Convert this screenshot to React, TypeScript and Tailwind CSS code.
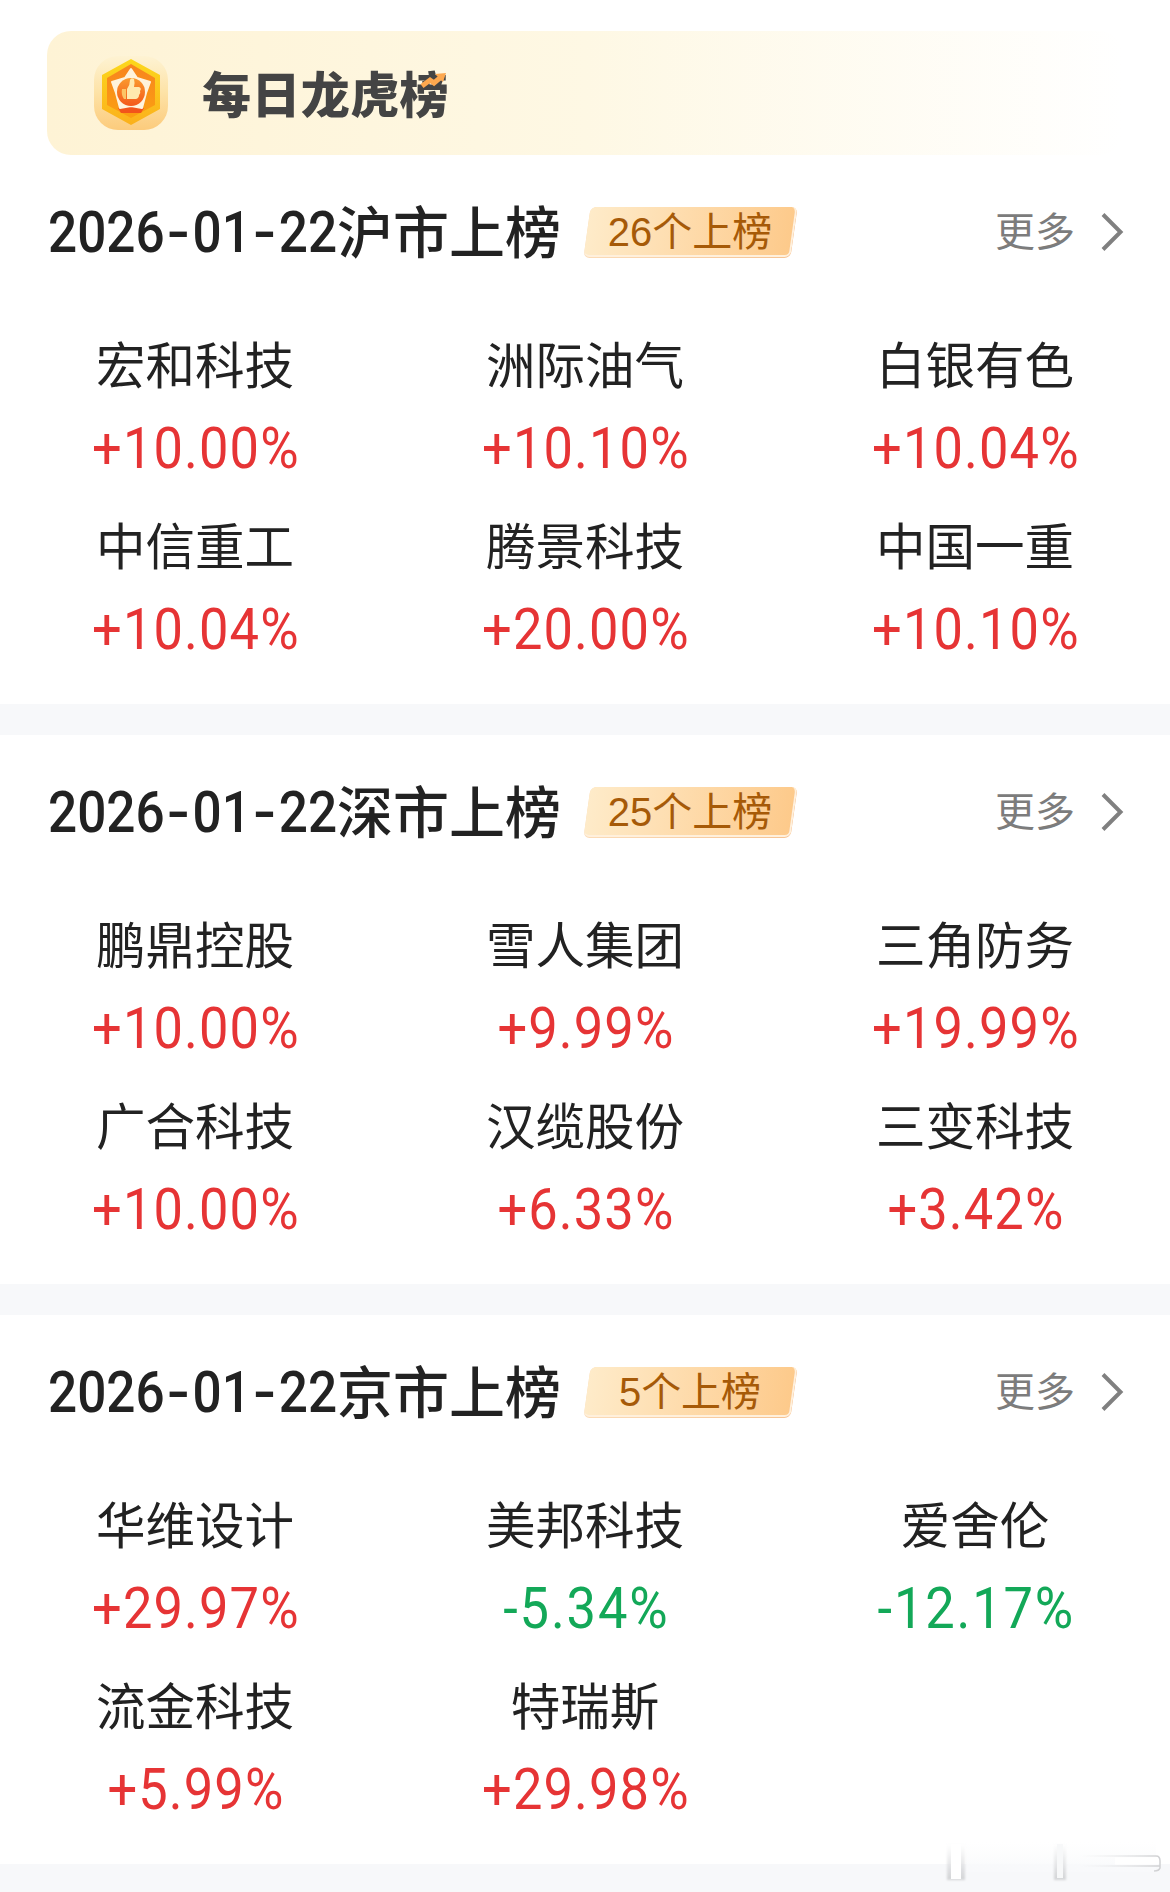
type Stock = {
  name: string;
  change: string;
};

type Market = {
  id: string;
  date: string;
  title: string;
  count: number;
  stocks: Stock[];
};

const MARKETS: Market[] = [
  {
    id: "sh",
    date: "2026-01-22",
    title: "沪市上榜",
    count: 26,
    stocks: [
      { name: "宏和科技", change: "+10.00%" },
      { name: "洲际油气", change: "+10.10%" },
      { name: "白银有色", change: "+10.04%" },
      { name: "中信重工", change: "+10.04%" },
      { name: "腾景科技", change: "+20.00%" },
      { name: "中国一重", change: "+10.10%" },
    ],
  },
  {
    id: "sz",
    date: "2026-01-22",
    title: "深市上榜",
    count: 25,
    stocks: [
      { name: "鹏鼎控股", change: "+10.00%" },
      { name: "雪人集团", change: "+9.99%" },
      { name: "三角防务", change: "+19.99%" },
      { name: "广合科技", change: "+10.00%" },
      { name: "汉缆股份", change: "+6.33%" },
      { name: "三变科技", change: "+3.42%" },
    ],
  },
  {
    id: "bj",
    date: "2026-01-22",
    title: "京市上榜",
    count: 5,
    stocks: [
      { name: "华维设计", change: "+29.97%" },
      { name: "美邦科技", change: "-5.34%" },
      { name: "爱舍伦", change: "-12.17%" },
      { name: "流金科技", change: "+5.99%" },
      { name: "特瑞斯", change: "+29.98%" },
    ],
  },
];

export default function App() {
  return (
    <div className="relative h-[1892px] w-[1170px] overflow-hidden bg-white font-['Noto_Sans_CJK_SC',sans-serif] text-[#222]">
      <Banner />
      {MARKETS.map((market) => (
        <MarketSection key={market.id} market={market} />
      ))}
      <Watermark />
    </div>
  );
}

function Banner() {
  return (
    <header className="h-[155px] pl-[47px] pt-[31px]">
      <div className="flex h-[124px] w-[1076px] items-center rounded-[24px] bg-linear-to-r from-[#fef3d5] via-[#fef8e4] to-white pl-[47px]">
        <MedalIcon />
        <h1 className="relative ml-[34px] pb-[4px] text-[49px] font-black leading-none tracking-[0.4px] text-[#444]">
          每日龙虎榜
          <svg viewBox="0 0 26 16" className="absolute right-[2px] top-[6px] h-[16px] w-[26px]">
            <path d="M1 13 L9 7 L13 10 L20 4" fill="none" stroke="#fda84f" strokeWidth="5" />
            <path d="M14 1 L25 0 L22 9 Z" fill="#fda84f" />
          </svg>
        </h1>
      </div>
    </header>
  );
}

function MedalIcon() {
  return (
    <svg viewBox="0 0 74 74" className="h-[74px] w-[74px]">
      <defs>
        <linearGradient id="tile" x1="0" y1="0" x2="0" y2="1">
          <stop offset="0" stopColor="#fef3d3" />
          <stop offset="0.5" stopColor="#fde2a6" />
          <stop offset="1" stopColor="#fccb7c" />
        </linearGradient>
        <linearGradient id="hex" x1="0" y1="0" x2="0" y2="1">
          <stop offset="0" stopColor="#fcd81c" />
          <stop offset="1" stopColor="#fbb01b" />
        </linearGradient>
        <linearGradient id="core" x1="0" y1="0" x2="0" y2="1">
          <stop offset="0" stopColor="#f88420" />
          <stop offset="1" stopColor="#fba010" />
        </linearGradient>
        <linearGradient id="disc" x1="0" y1="0" x2="0" y2="1">
          <stop offset="0" stopColor="#fa9a2e" />
          <stop offset="1" stopColor="#f4581a" />
        </linearGradient>
      </defs>
      <rect width="74" height="74" rx="24" fill="url(#tile)" />
      <path d="M37 3 L66 19 V53 L37 69 L8 53 V19 Z" fill="url(#hex)" />
      <path d="M37 8 L61 22 V49 L37 62 L13 49 V22 Z" fill="url(#core)" />
      <path d="M24 52 L37 50 L50 52 L47 57 H27 Z" fill="#f2541b" />
      <path
        d="M37 13 L43 22 L56 26 L52 37 L48 52 L37 50 L26 52 L22 37 L18 26 L31 22 Z"
        fill="#fff3dc"
        stroke="#fff3dc"
        strokeWidth="2"
        strokeLinejoin="round"
      />
      <circle cx="37" cy="36" r="14" fill="url(#disc)" />
      <path d="M28 33 H32 V43 H30 Q27 39 28 33 Z" fill="#fcc465" />
      <path
        d="M33 33 Q36 29 36 24 Q37 21 40 23 Q41 26 40 31 H45 Q48 32 46 35 Q47 37 45 39 Q45 42 42 43 H33 Z"
        fill="#ffe9ae"
      />
    </svg>
  );
}

function MarketSection({ market }: { market: Market }) {
  return (
    <section className="h-[580px] border-b-[31px] border-[#f7f8fa]">
      <div className="flex h-[154px] items-center pl-[48px] pr-[46px]">
        <h2 className="flex w-[512px] items-center whitespace-nowrap text-[56px] font-medium leading-none">
          <DateText date={market.date} />
          <span className="pb-[6px]">{market.title}</span>
        </h2>
        <CountBadge count={market.count} />
        <a className="ml-auto flex items-center text-[40px] leading-none text-[#7c7c7c]">
          <span className="pb-[6px]">更多</span>
          <svg viewBox="0 0 24 40" className="ml-[25px] h-[40px] w-[24px]">
            <path d="M3 2.500 L20.500 20 L3 37.500" fill="none" stroke="#808080" strokeWidth="4" />
          </svg>
        </a>
      </div>
      <div className="grid grid-cols-3 text-center">
        {market.stocks.map((stock) => (
          <StockCell key={stock.name} stock={stock} />
        ))}
      </div>
    </section>
  );
}

function DateText({ date }: { date: string }) {
  const parts = date.split("-");

  return (
    <span className="flex w-[289px] items-center pt-[1px] font-[Roboto,sans-serif] text-[57px]">
      <span className="flex origin-left scale-x-90">
        {parts.map((part, i) => (
          <span key={i} className="flex">
            {i > 0 && (
              <span className="flex w-[31px] justify-center">
                <span className="scale-x-130">-</span>
              </span>
            )}
            {part}
          </span>
        ))}
      </span>
    </span>
  );
}

function CountBadge({ count }: { count: number }) {
  return (
    <div className="relative ml-[24px] flex h-[51px] w-[213px] items-center justify-center">
      <span className="absolute inset-x-[3px] inset-y-0 -skew-x-[8deg] rounded-[6px] bg-linear-to-r from-[#fbdcb8] to-[#f6c392]" />
      <span className="absolute inset-x-[3px] top-0 bottom-[1px] -skew-x-[8deg] rounded-[6px] border-b-2 border-r-2 border-[#fff0dc] bg-linear-to-r from-[#feebc9] to-[#fdca8b]" />
      <span className="relative whitespace-nowrap pr-[1px] font-['Liberation_Sans','Noto_Sans_CJK_SC',sans-serif] text-[40px] leading-none text-[#a65a08]">
        {count}个上榜
      </span>
    </div>
  );
}

function StockCell({ stock }: { stock: Stock }) {
  const isDown = stock.change.startsWith("-");

  return (
    <div className="h-[181px]">
      <div className="flex h-[113px] items-center justify-center pb-[6px] text-[49.500px] leading-none">
        {stock.name}
      </div>
      <div
        className={
          isDown
            ? "scale-x-92 pl-[3px] font-[Roboto,sans-serif] text-[57px] leading-[53px] tracking-[2px] text-[#13a858]"
            : "scale-x-92 pl-[2px] font-[Roboto,sans-serif] text-[57px] leading-[53px] tracking-[1.2px] text-[#e63435]"
        }
      >
        {stock.change}
      </div>
    </div>
  );
}

// Faint embossed strokes in the bottom-right corner
function Watermark() {
  return (
    <svg viewBox="0 0 240 52" className="absolute bottom-0 right-0 h-[52px] w-[240px]">
      <defs>
        <linearGradient id="fade" x1="0" y1="0" x2="0" y2="1">
          <stop offset="0" stopColor="#dcdddf" stopOpacity="0" />
          <stop offset="1" stopColor="#d2d3d5" />
        </linearGradient>
        <linearGradient id="haze" x1="0" y1="0" x2="0" y2="1">
          <stop offset="0" stopColor="#fafbfc" stopOpacity="0" />
          <stop offset="1" stopColor="#f8f9fb" />
        </linearGradient>
        <linearGradient id="bar" gradientUnits="userSpaceOnUse" x1="150" y1="0" x2="230" y2="0">
          <stop offset="0" stopColor="#e4e5e7" stopOpacity="0" />
          <stop offset="1" stopColor="#cfd0d2" />
        </linearGradient>
        <filter id="soft">
          <feGaussianBlur stdDeviation="1.2" />
        </filter>
      </defs>
      <rect x="36" y="2" width="190" height="30" fill="url(#haze)" />
      <rect x="17" y="4" width="18" height="36" fill="url(#fade)" filter="url(#soft)" />
      <rect x="21" y="4" width="10" height="35" fill="#fff" />
      <rect x="124" y="4" width="12" height="36" fill="url(#fade)" filter="url(#soft)" />
      <rect x="127" y="4" width="6" height="34" fill="#f7f8f9" />
      <path d="M150 16 H226 Q230 16 230 21 V28 Q229 31 224 31 M150 26 H230" fill="none" stroke="url(#bar)" strokeWidth="1.500" />
      <rect x="185" y="17.500" width="43" height="7" fill="#fff" />
    </svg>
  );
}
